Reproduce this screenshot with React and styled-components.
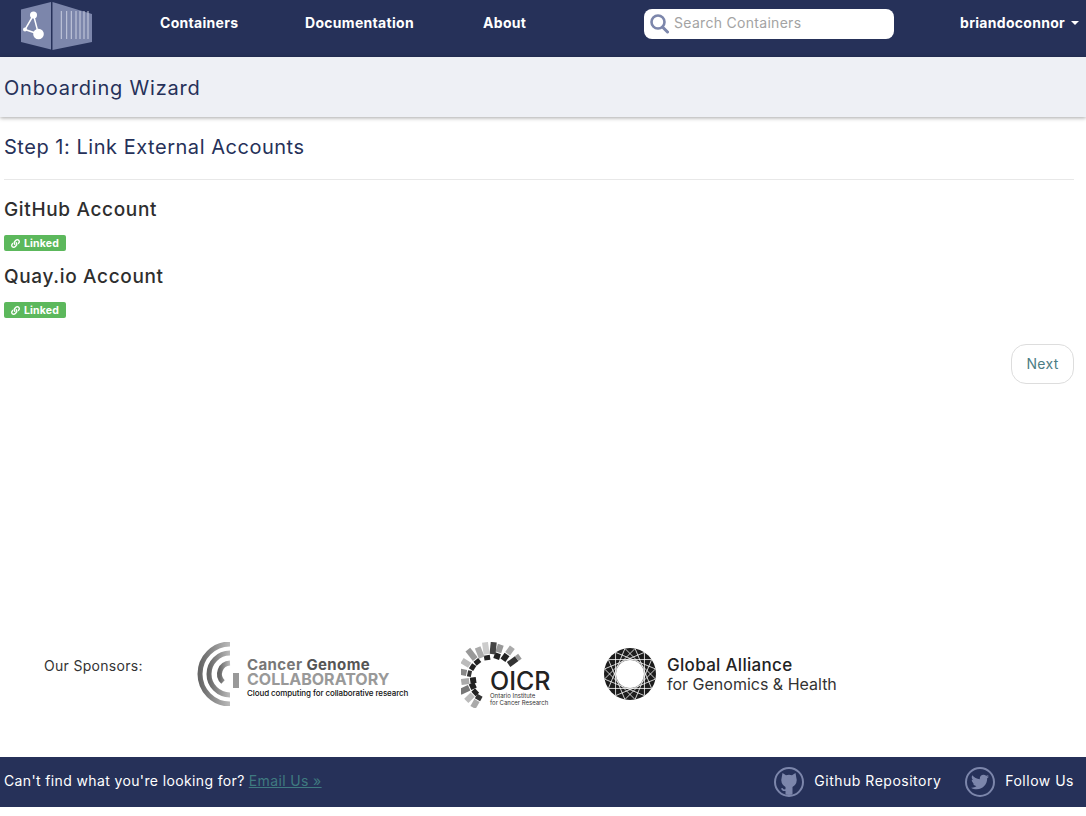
import React from 'react';
import styled, { createGlobalStyle } from 'styled-components';
import { FaLink, FaTwitter } from 'react-icons/fa';

const NAVY = '#263159';
const MUTED = '#7c86ab';

const GlobalStyle = createGlobalStyle`
  html, body { margin: 0; padding: 0; background: #fff; }
  body { font-family: Inter, "Noto Sans", "Liberation Sans", sans-serif; color: #333; }
  * { box-sizing: border-box; }
`;

const Page = styled.div`
  width: 1086px;
  height: 816px;
  overflow: hidden;
`;

const Navbar = styled.nav`
  height: 57px;
  padding-bottom: 12px;
  background: ${NAVY};
  display: flex;
  align-items: center;
`;

const Brand = styled.a`
  display: block;
  width: 160px;
  height: 56px;
  margin-bottom: -12px;
  flex: none;
`;

const NavLink = styled.a`
  font-size: 14px;
  font-weight: 700;
  letter-spacing: 0.3px;
  color: #fff;
  width: ${p => p.$width}px;
  flex: none;
`;

const SearchBox = styled.div`
  width: 250px;
  height: 30px;
  background: #fff;
  border-radius: 8px;
  margin: 2px 0 0 116px;
  display: flex;
  align-items: center;
  padding: 0 0 2px 5px;
  gap: 5px;
  flex: none;
`;

const SearchText = styled.span`
  font-size: 14px;
  letter-spacing: 0.3px;
  color: #a3a3a3;
`;

const UserMenu = styled.a`
  margin-left: 66px;
  font-size: 14px;
  font-weight: 700;
  letter-spacing: 0.3px;
  color: #fff;
  display: flex;
  align-items: center;
  gap: 6px;
  white-space: nowrap;
`;

const Caret = styled.span`
  width: 0;
  height: 0;
  border-left: 4px solid transparent;
  border-right: 4px solid transparent;
  border-top: 4px solid #fff;
`;

const SubHeader = styled.header`
  height: 60px;
  background: #eef0f5;
  box-shadow: 0 1px 4px rgba(0, 0, 0, 0.35);
  padding: 2px 4px 0;
  display: flex;
  align-items: center;
`;

const PageTitle = styled.h1`
  margin: 0;
  font-size: 20px;
  font-weight: 400;
  letter-spacing: 0.8px;
  color: ${NAVY};
`;

const Content = styled.main`
  padding: 0 12px 0 4px;
  height: 525px;
`;

const StepTitle = styled.h2`
  margin: 0;
  padding-top: 18px;
  height: 63px;
  font-size: 20px;
  line-height: 24px;
  font-weight: 400;
  letter-spacing: 0.53px;
  color: ${NAVY};
  border-bottom: 1px solid #e8e8e8;
`;

const AccountTitle = styled.h3`
  margin: 0;
  font-size: 19px;
  line-height: 22px;
  font-weight: 500;
  letter-spacing: 0.66px;
  color: #2e2e2e;
`;

const Account = styled.section`
  padding-top: ${p => p.$top}px;
  height: ${p => p.$height}px;
`;

const Badge = styled.span`
  margin-top: 14px;
  width: 62px;
  height: 16px;
  background: #5cb85c;
  border-radius: 2px;
  color: #fff;
  font-size: 10.5px;
  font-weight: 700;
  letter-spacing: 0.2px;
  display: flex;
  align-items: center;
  justify-content: center;
  gap: 4px;
`;

const ButtonRow = styled.div`
  display: flex;
  justify-content: flex-end;
  padding-top: 25px;
`;

const NextButton = styled.button`
  width: 63px;
  height: 40px;
  background: #fff;
  border: 1px solid #ddd;
  border-radius: 15px;
  color: #4c7d84;
  font: 400 14px Inter, sans-serif;
  letter-spacing: 0.3px;
  padding: 0 0 2px;
`;

const Sponsors = styled.section`
  height: 115px;
  padding-left: 44px;
  display: flex;
  align-items: flex-start;
`;

const SponsorLabel = styled.span`
  font-size: 14px;
  line-height: 18px;
  letter-spacing: 0.3px;
  margin-top: 15px;
  width: 153px;
  flex: none;
  color: #333;
`;

const SponsorLogo = styled.div`
  display: flex;
  align-items: center;
  flex: none;
  width: ${p => p.$width}px;
  gap: ${p => p.$gap || 0}px;
  margin-top: ${p => p.$top || 0}px;
`;

const LogoText = styled.div`
  display: flex;
  flex-direction: column;
  margin: ${p => p.$margin || 0};
`;

const LogoLine = styled.span`
  font-size: ${p => p.$size}px;
  line-height: ${p => p.$line}px;
  font-weight: ${p => p.$weight};
  color: ${p => p.$color};
  letter-spacing: ${p => p.$spacing || 0}px;
  white-space: nowrap;
`;

const DarkWord = styled.span`
  color: #555;
`;

const Footer = styled.footer`
  height: 50px;
  background: ${NAVY};
  color: #fff;
  padding: 0 12px 0 4px;
  display: flex;
  align-items: center;
  justify-content: space-between;
  font-size: 14px;
  letter-spacing: 0.37px;
`;

const FooterLeft = styled.span`
  display: flex;
  gap: 4px;
  padding-bottom: 3px;
`;

const EmailLink = styled.a`
  color: #3f7a80;
  text-decoration: underline;
`;

const FooterLinks = styled.div`
  display: flex;
  gap: 24px;
`;

const FooterLink = styled.a`
  display: flex;
  align-items: center;
  gap: 10px;
  color: #fff;
  letter-spacing: 0.5px;
`;

const FooterLabel = styled.span`
  padding-bottom: 3px;
`;

const IconRing = styled.span`
  width: 30px;
  height: 30px;
  border-radius: 50%;
  border: 2px solid ${MUTED};
  color: ${MUTED};
  display: flex;
  align-items: center;
  justify-content: center;
  overflow: hidden;
`;

const containerSlats = [61.3, 66.7, 71.3, 76, 80, 84, 88];

const ContainerLogo = () => (
  <svg width="160" height="56" viewBox="0 0 160 56">
    <polygon points="21,8.5 51,1 51,48.5 21,41" fill={MUTED} />
    <polygon points="52.5,1 92,13 92,41 52.5,49" fill={MUTED} />
    {containerSlats.map(x => (
      <line key={x} x1={x} y1="10" x2={x} y2="38" stroke="#c9cee0" strokeWidth="1" />
    ))}
    <path d="M33.5 14 L25 28.5 L38.5 33 Z" fill="none" stroke="#fff" strokeWidth="1.5" />
    <circle cx="33.5" cy="14" r="3.5" fill="#fff" />
    <circle cx="25" cy="28.5" r="2" fill="#fff" />
    <circle cx="38.5" cy="33" r="5.3" fill="#fff" />
  </svg>
);

const SearchIcon = () => (
  <svg width="20" height="22" viewBox="0 0 20 22">
    <circle cx="9" cy="10" r="6.5" fill="none" stroke={MUTED} strokeWidth="2.6" />
    <line x1="13.5" y1="15" x2="18.5" y2="20" stroke={MUTED} strokeWidth="3" strokeLinecap="round" />
  </svg>
);

const arc = (r) => `M33 ${32 - r} A${r} ${r} 0 1 0 33 ${32 + r}`;

const CollaboratoryMark = () => (
  <svg width="50" height="64" viewBox="0 0 50 64">
    <defs>
      <linearGradient id="cgc" x1="0" x2="1" y1="0" y2="0">
        <stop offset="0" stopColor="#666" />
        <stop offset="1" stopColor="#bbb" />
      </linearGradient>
    </defs>
    <path d={arc(30)} fill="none" stroke="url(#cgc)" strokeWidth="5" />
    <path d={arc(21)} fill="none" stroke="url(#cgc)" strokeWidth="5" />
    <path d="M33 21 A11 11 0 0 0 26 40" fill="none" stroke="url(#cgc)" strokeWidth="5" />
    <rect x="36" y="31" width="6" height="15" fill="#999" />
  </svg>
);

// spokes of the OICR burst: angle, inner radius, length, shade
const oicrSpokes = [
  [-36, 23, 10, '#333'], [-36, 33, 4, '#999'], [-54, 22, 7, '#222'], [-54, 30, 8, '#aaa'],
  [-72, 20, 6, '#222'], [-72, 27, 8, '#999'], [-84, 24, 12, '#444'], [-98, 18, 5, '#222'],
  [-98, 24, 12, '#ccc'], [-112, 22, 11, '#aaa'], [-128, 18, 5, '#222'], [-128, 24, 12, '#999'],
  [-148, 18, 5, '#222'], [-148, 24, 9, '#bbb'], [-168, 19, 4, '#333'], [-168, 24, 8, '#888'],
  [172, 14, 6, '#222'], [172, 21, 8, '#aaa'], [155, 16, 6, '#222'], [155, 23, 10, '#777'],
  [136, 18, 5, '#222'], [136, 24, 9, '#bbb'], [120, 20, 5, '#333'], [120, 26, 8, '#aaa'],
];

const OicrMark = () => (
  <svg width="64" height="66" viewBox="0 0 64 66">
    {oicrSpokes.map(([a, r, len, fill], i) => (
      <rect
        key={i}
        x={r}
        y="-3"
        width={len}
        height="6"
        fill={fill}
        transform={`translate(29 36) rotate(${a})`}
      />
    ))}
  </svg>
);

const ringPoints = Array.from({ length: 16 }, (_, i) => {
  const a = ((i * 22.5 + 11.25) * Math.PI) / 180;
  return [26 + 26 * Math.cos(a), 26 + 26 * Math.sin(a)];
});

const AllianceMark = () => (
  <svg width="52" height="52" viewBox="0 0 52 52">
    <circle cx="26" cy="26" r="26" fill="#1c1c1c" />
    {ringPoints.map(([x, y], i) => {
      const [x2, y2] = ringPoints[(i + 5) % 16];
      return <line key={i} x1={x} y1={y} x2={x2} y2={y2} stroke="#fff" strokeWidth="0.8" />;
    })}
    <circle cx="26" cy="26" r="14" fill="#fff" />
  </svg>
);

const GithubCat = () => (
  <svg width="26" height="26" viewBox="0 0 26 26">
    <path
      fill="currentColor"
      d="M6.5 4 L10 6.3 a10 10 0 0 1 6 0 L19.5 4 L20.3 8.5 a7.6 7.6 0 0 1 -3.8 9.5 V26 h-7 V22 c-2 .4-3.5-.2-4.5-2.5 l1.6-.5 c1 1.6 1.8 1.5 2.9 1.3 V18 a7.6 7.6 0 0 1 -3.8-9.5 Z"
    />
  </svg>
);

const LinkedBadge = () => (
  <Badge>
    <FaLink size={9} />
    Linked
  </Badge>
);

export default function App() {
  return (
    <Page>
      <GlobalStyle />
      <Navbar>
        <Brand><ContainerLogo /></Brand>
        <NavLink $width={145}>Containers</NavLink>
        <NavLink $width={178}>Documentation</NavLink>
        <NavLink $width={45}>About</NavLink>
        <SearchBox>
          <SearchIcon />
          <SearchText>Search Containers</SearchText>
        </SearchBox>
        <UserMenu>briandoconnor <Caret /></UserMenu>
      </Navbar>
      <SubHeader>
        <PageTitle>Onboarding Wizard</PageTitle>
      </SubHeader>
      <Content>
        <StepTitle>Step 1: Link External Accounts</StepTitle>
        <Account $top={19} $height={72}>
          <AccountTitle>GitHub Account</AccountTitle>
          <LinkedBadge />
        </Account>
        <Account $top={14} $height={67}>
          <AccountTitle>Quay.io Account</AccountTitle>
          <LinkedBadge />
        </Account>
        <ButtonRow><NextButton>Next</NextButton></ButtonRow>
      </Content>
      <Sponsors>
        <SponsorLabel>Our Sponsors:</SponsorLabel>
        <SponsorLogo $width={264}>
          <CollaboratoryMark />
          <LogoText $margin="7px 0 0 0">
            <LogoLine $size={15} $line={15} $weight={700} $color="#777" $spacing={0.4}>Cancer <DarkWord>Genome</DarkWord></LogoLine>
            <LogoLine $size={16} $line={15} $weight={700} $color="#999">COLLABORATORY</LogoLine>
            <LogoLine $size={8} $line={12} $weight={500} $color="#111" $spacing={-0.1}>Cloud computing for collaborative research</LogoLine>
          </LogoText>
        </SponsorLogo>
        <SponsorLogo $width={143}>
          <OicrMark />
          <LogoText $margin="26px 0 0 -35px">
            <LogoLine $size={25} $line={21} $weight={500} $color="#222">OICR</LogoLine>
            <LogoLine $size={6} $line={7} $weight={400} $color="#333">Ontario Institute</LogoLine>
            <LogoLine $size={6} $line={7} $weight={400} $color="#333">for Cancer Research</LogoLine>
          </LogoText>
        </SponsorLogo>
        <SponsorLogo $width={240} $gap={11} $top={6}>
          <AllianceMark />
          <LogoText>
            <LogoLine $size={17} $line={20} $weight={500} $color="#222" $spacing={0.3}>Global Alliance</LogoLine>
            <LogoLine $size={16} $line={18} $weight={400} $color="#333">for Genomics &amp; Health</LogoLine>
          </LogoText>
        </SponsorLogo>
      </Sponsors>
      <Footer>
        <FooterLeft>Can't find what you're looking for? <EmailLink>Email Us »</EmailLink></FooterLeft>
        <FooterLinks>
          <FooterLink><IconRing><GithubCat /></IconRing><FooterLabel>Github Repository</FooterLabel></FooterLink>
          <FooterLink><IconRing><FaTwitter size={18} /></IconRing><FooterLabel>Follow Us</FooterLabel></FooterLink>
        </FooterLinks>
      </Footer>
    </Page>
  );
}
